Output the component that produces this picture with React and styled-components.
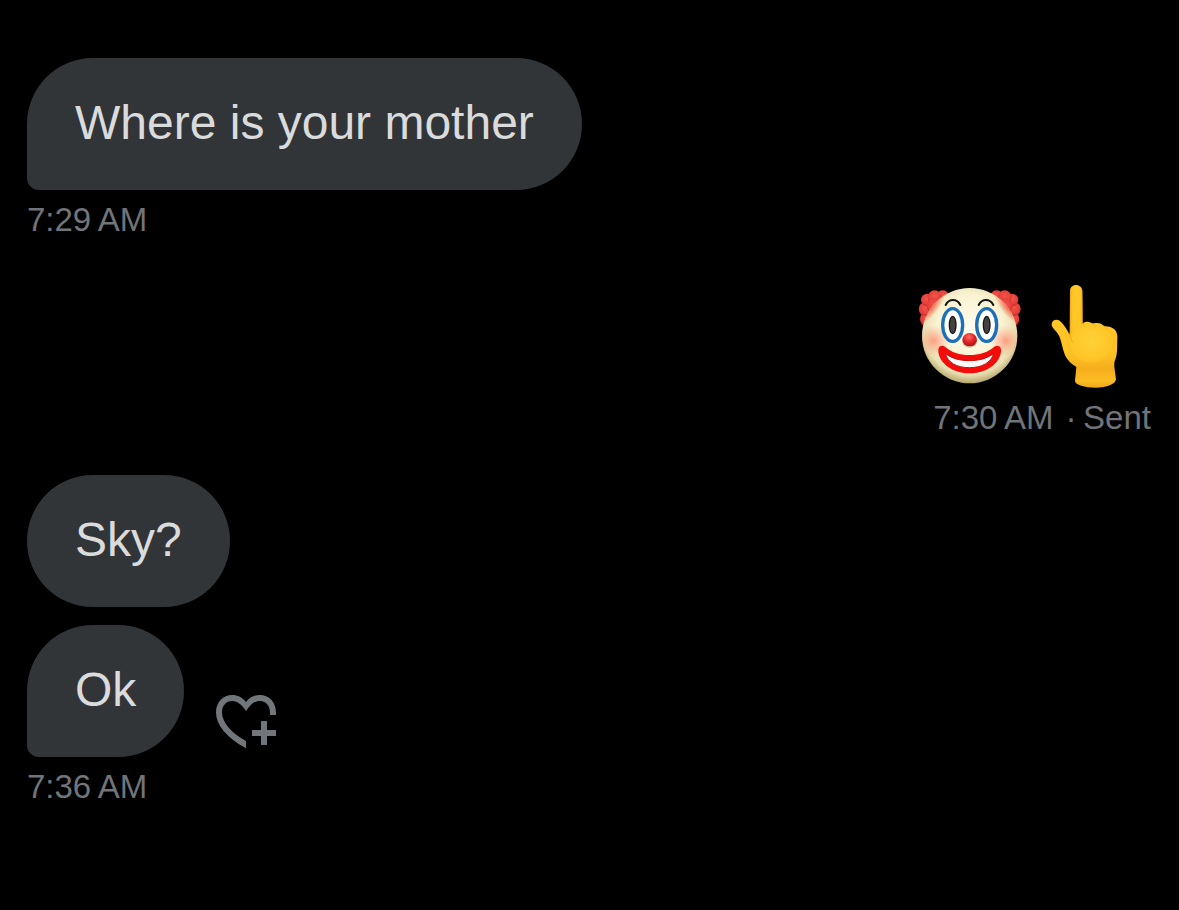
import styled, { createGlobalStyle } from "styled-components";

export default function App() {
  return (
    <>
      <GlobalStyle />
      <Thread>
        <Group>
          <Bubble $tail>Where is your mother</Bubble>
          <Meta>
            <time dateTime="07:29">7:29{"\u202f"}AM</time>
          </Meta>
        </Group>
        <Group $mine>
          <Emojis>
            <Clown />
            <PointingUp />
          </Emojis>
          <Meta>
            <time dateTime="07:30">7:30{"\u202f"}AM</time>
            <span>·{"\u2009"}Sent</span>
          </Meta>
        </Group>
        <Group>
          <Stack>
            <Bubble>Sky?</Bubble>
            <Row>
              <Bubble $tail>Ok</Bubble>
              <ReactButton type="button" aria-label="Add reaction">
                <HeartPlus />
              </ReactButton>
            </Row>
          </Stack>
          <Meta>
            <time dateTime="07:36">7:36{"\u202f"}AM</time>
          </Meta>
        </Group>
      </Thread>
    </>
  );
}

function HeartPlus() {
  return (
    <svg viewBox="0 0 24 24" fill="currentColor" aria-hidden="true">
      <path d="M22 10h-2v-.8c0-2.4-1.4-3.9-3.4-3.9-1.8 0-3.2 1.2-4.6 3.4-1.4-2.2-2.8-3.4-4.6-3.4C5.4 5.3 4 6.8 4 9.2c0 3.2 3 6.8 8 9.5v2.4C5.5 17.6 2 13.3 2 9.2c0-3.6 2.4-5.9 5.4-5.9 1.8 0 3.4.8 4.6 2.4 1.2-1.6 2.8-2.4 4.6-2.4 3 0 5.4 2.3 5.4 5.9z" />
      <path d="M17 12h2v3h3v2h-3v3h-2v-3h-3v-2h3z" />
    </svg>
  );
}

function Clown() {
  return (
    <svg viewBox="42 21 333 333" role="img" aria-label="Clown face">
      <defs>
        <radialGradient id="face" cx="0.5" cy="0.42" r="0.58">
          <stop offset="0" stopColor="#fffdec" />
          <stop offset="0.6" stopColor="#faf3d3" />
          <stop offset="0.85" stopColor="#e9dfb0" />
          <stop offset="1" stopColor="#b5a66c" />
        </radialGradient>
        <radialGradient id="cheek">
          <stop offset="0" stopColor="#ff8469" stopOpacity="0.75" />
          <stop offset="1" stopColor="#ff9c80" stopOpacity="0" />
        </radialGradient>
        <radialGradient id="hair" cx="0.5" cy="0.4" r="0.6">
          <stop offset="0" stopColor="#f2554a" />
          <stop offset="0.7" stopColor="#e5403a" />
          <stop offset="1" stopColor="#c92a29" />
        </radialGradient>
        <radialGradient id="nose" cx="0.45" cy="0.3" r="0.7">
          <stop offset="0" stopColor="#ff7266" />
          <stop offset="0.5" stopColor="#e7252b" />
          <stop offset="1" stopColor="#ad1117" />
        </radialGradient>
        <radialGradient id="hairGlow">
          <stop offset="0" stopColor="#f2523d" stopOpacity="0.9" />
          <stop offset="1" stopColor="#f2523d" stopOpacity="0" />
        </radialGradient>
        <clipPath id="faceClip">
          <circle cx="209" cy="197" r="143" />
        </clipPath>
      </defs>
      <g fill="url(#hair)">
        <circle cx="82" cy="147" r="22" />
        <circle cx="128" cy="82" r="21" />
        <circle cx="77" cy="117" r="21" />
        <circle cx="82" cy="90" r="19" />
        <circle cx="104" cy="82" r="21" />
        <circle cx="103" cy="108" r="23" />
        <circle cx="336" cy="147" r="22" />
        <circle cx="290" cy="82" r="21" />
        <circle cx="341" cy="117" r="21" />
        <circle cx="336" cy="90" r="19" />
        <circle cx="314" cy="82" r="21" />
        <circle cx="315" cy="108" r="23" />
      </g>
      <circle cx="209" cy="197" r="143" fill="url(#face)" />
      <g clipPath="url(#faceClip)">
        <ellipse
          cx="93"
          cy="112"
          rx="22"
          ry="65"
          fill="url(#hairGlow)"
          transform="rotate(38 93 112)"
        />
        <ellipse
          cx="325"
          cy="112"
          rx="22"
          ry="65"
          fill="url(#hairGlow)"
          transform="rotate(-38 325 112)"
        />
        <circle cx="101" cy="212" r="47" fill="url(#cheek)" />
        <circle cx="317" cy="212" r="47" fill="url(#cheek)" />
      </g>
      <g fill="none" stroke="#161414" strokeWidth="6" strokeLinecap="round">
        <path d="M137 105c10-20 34-20 44 0" />
        <path d="M236 105c10-20 34-20 44 0" />
      </g>
      <g fill="#fff" stroke="#1c70b7" strokeWidth="10">
        <ellipse cx="158" cy="165" rx="30" ry="49" />
        <ellipse cx="260" cy="165" rx="30" ry="49" />
      </g>
      <g fill="#45413e" stroke="#161414" strokeWidth="4">
        <ellipse cx="158" cy="165" rx="10" ry="26" />
        <ellipse cx="260" cy="165" rx="10" ry="26" />
      </g>
      <ellipse cx="209" cy="215" rx="22" ry="18" fill="#8b7b4c" opacity="0.4" />
      <ellipse cx="209" cy="209" rx="22" ry="20" fill="url(#nose)" />
      <path
        d="M115 237c2-10 12-13 20-7 20 17 43 25 73 25s55-8 75-25c8-6 18-3 20 7 3 34-34 73-94 73s-97-39-94-73z"
        fill="#f40c0b"
      />
      <path
        d="M136 251c22 15 45 21 72 21s51-6 73-21c-8 27-35 42-73 42s-64-15-72-42z"
        fill="#fffafa"
        stroke="#b8150d"
        strokeWidth="3"
        strokeLinejoin="round"
      />
    </svg>
  );
}

function PointingUp() {
  return (
    <svg viewBox="-15 21 333 333" role="img" aria-label="Hand pointing up">
      <defs>
        <linearGradient id="skin" x1="0" y1="0" x2="0" y2="1">
          <stop offset="0" stopColor="#ffc928" />
          <stop offset="0.65" stopColor="#ffc426" />
          <stop offset="0.82" stopColor="#f6ad1c" />
          <stop offset="0.93" stopColor="#fcbc23" />
          <stop offset="1" stopColor="#efa81a" />
        </linearGradient>
        <radialGradient
          id="palm"
          gradientUnits="userSpaceOnUse"
          cx="168"
          cy="215"
          r="82"
        >
          <stop offset="0" stopColor="#ffd13a" />
          <stop offset="0.7" stopColor="#ffc829" stopOpacity="0.7" />
          <stop offset="1" stopColor="#f5ad1a" stopOpacity="0" />
        </radialGradient>
        <linearGradient id="finger">
          <stop offset="0" stopColor="#e79b12" stopOpacity="0.7" />
          <stop offset="0.3" stopColor="#ffcb2b" stopOpacity="0" />
          <stop offset="0.7" stopColor="#ffcb2b" stopOpacity="0" />
          <stop offset="1" stopColor="#e79b12" stopOpacity="0.7" />
        </linearGradient>
      </defs>
      <path
        d="M105 64c0-12 8-19 18-19s19 7 19 19l1 97c7-8 24-7 30 2 9-7 27-5 34 6 12-1 23 2 31 9 8 8 10 17 9 30-1 20 1 43-6 60-4 9-4 18-2 30l4 30c-2 15-27 25-61 25s-61-8-62-20l4-42c-17-10-30-23-36-41-9-26-9-48-24-65-9-9-15-16-14-23 2-14 19-17 29-5 11 12 18 24 25 38z"
        fill="url(#skin)"
      />
      <path
        d="M105 64c0-12 8-19 18-19s19 7 19 19l1 97-5 22-33 12z"
        fill="url(#finger)"
      />
      <ellipse cx="168" cy="218" rx="74" ry="60" fill="url(#palm)" />
      <path
        d="M105 193c1 11 3 17 7 23"
        fill="none"
        stroke="#e59a13"
        strokeWidth="4"
        strokeLinecap="round"
        opacity="0.5"
      />
      <path
        d="M143 161c5 3 7 6 7 10M173 163c5 2 7 5 8 9M207 169c4 1 7 4 8 8"
        fill="none"
        stroke="#eba418"
        strokeWidth="3"
        strokeLinecap="round"
        opacity="0.6"
      />
    </svg>
  );
}

const GlobalStyle = createGlobalStyle`
  body {
    margin: 0;
    background: #000;
    font-family: "Liberation Sans", Arial, sans-serif;
  }
`;
const Thread = styled.main`
  display: flex;
  flex-direction: column;
  gap: 37px;
  padding: 58px 28px 58px 27px;
`;
const Group = styled.section`
  display: flex;
  flex-direction: column;
  align-items: ${(props) => (props.$mine ? "flex-end" : "flex-start")};
  gap: 10px;
`;
const Stack = styled.div`
  display: flex;
  flex-direction: column;
  align-items: flex-start;
  gap: 18px;
`;
const Row = styled.div`
  display: flex;
  align-items: flex-end;
  gap: 26px;
`;
const Bubble = styled.p`
  margin: 0;
  padding: 35px 48px 37px;
  border-radius: 66px;
  border-bottom-left-radius: ${(props) => (props.$tail ? "12px" : "66px")};
  background: #323538;
  color: #dadbdc;
  font-size: 48px;
  line-height: 60px;
`;
const Meta = styled.div`
  display: flex;
  gap: 12px;
  color: #717478;
  font-size: 33px;
  line-height: 40px;
`;
const Emojis = styled.div`
  display: flex;
  gap: 5px;
  padding-right: 10px;
  svg {
    display: block;
    width: 111px;
    height: 111px;
  }
`;
const ReactButton = styled.button`
  padding: 0;
  border: 0;
  background: none;
  color: #71767b;
  cursor: pointer;
  svg {
    display: block;
    width: 72px;
    height: 72px;
  }
`;
